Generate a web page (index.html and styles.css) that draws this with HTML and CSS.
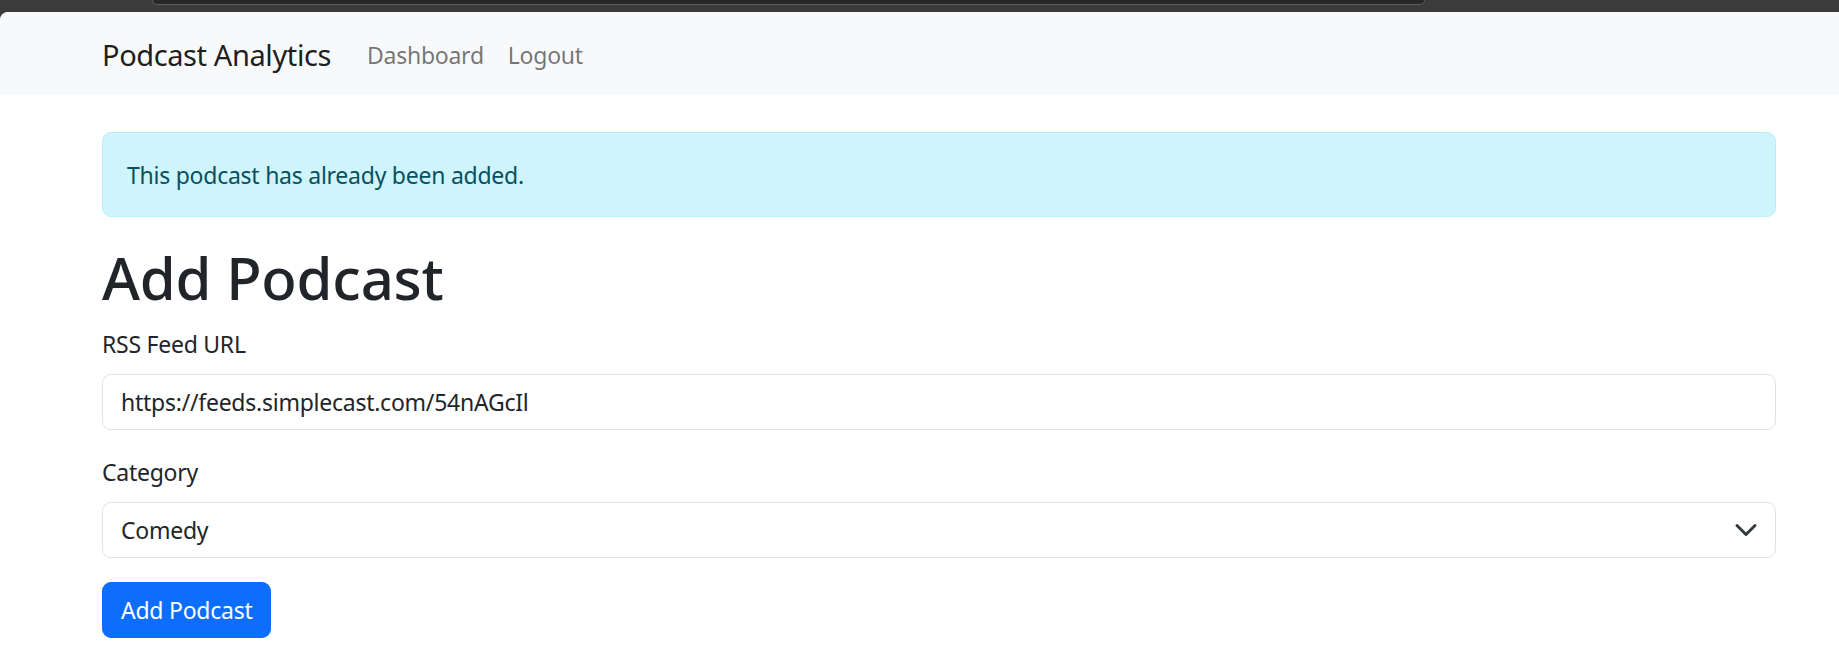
FILE: index.html
```html
<!DOCTYPE html>
<html lang="en">
<head>
<meta charset="utf-8">
<title>Add Podcast</title>
<link rel="stylesheet" href="styles.css">
</head>
<body>
<div class="chrome"><div class="chrome-bar"></div></div>
<div class="page">
  <nav class="navbar">
    <div class="container nav-inner">
      <a class="brand" href="#">Podcast Analytics</a>
      <a class="nav-link" href="#">Dashboard</a>
      <a class="nav-link" href="#">Logout</a>
    </div>
  </nav>
  <main class="container main">
    <div class="alert">This podcast has already been added.</div>
    <h1 class="title">Add Podcast</h1>
    <form class="form">
      <div class="field">
        <label class="label" for="rss">RSS Feed URL</label>
        <input class="control" id="rss" type="text" value="https://feeds.simplecast.com/54nAGcIl">
      </div>
      <div class="field">
        <label class="label" for="cat">Category</label>
        <div class="select-wrap">
          <div class="control select" id="cat">Comedy</div>
          <svg class="chevron" viewBox="0 0 16 16" width="24" height="24"><path d="m2 5 6 6 6-6" fill="none" stroke="#343a40" stroke-width="2" stroke-linecap="round" stroke-linejoin="round"/></svg>
        </div>
      </div>
      <button class="btn" type="button">Add Podcast</button>
    </form>
  </main>
</div>
</body>
</html>
```
FILE: styles.css
```css
* { box-sizing: border-box; }
html, body { margin: 0; padding: 0; }
body {
  background: #3b3b3b;
  font-family: "Noto Sans", "Open Sans", sans-serif;
  font-size: 23px;
  letter-spacing: -0.25px;
  color: #212529;
  overflow: hidden;
}
.chrome {
  height: 12px;
  padding-left: 152px;
  display: flex;
  align-items: flex-start;
}
.chrome-bar {
  width: 1273px;
  height: 5px;
  background: #282828;
  border: 1px solid #5c5c5c;
  border-top: none;
  border-radius: 0 0 9px 9px;
}
.page {
  background: #fff;
  border-top-left-radius: 8px;
  height: 644px;
  overflow: hidden;
}
.container {
  width: 1674px;
  margin-left: 102px;
}
.navbar {
  background: #f8f9fa;
  height: 83px;
  border-top-left-radius: 8px;
  display: flex;
  align-items: center;
}
.nav-inner {
  display: flex;
  align-items: center;
  padding-top: 2px;
}
.brand {
  font-size: 29px;
  letter-spacing: -0.4px;
  color: rgba(0,0,0,.9);
  text-decoration: none;
  margin-right: 24px;
}
.nav-link {
  color: rgba(0,0,0,.55);
  text-decoration: none;
  padding: 0 12px;
}
.main {
  padding-top: 37px;
}
.alert {
  background: #cff4fc;
  border: 1.5px solid #b6effb;
  color: #055160;
  border-radius: 9px;
  height: 85px;
  padding: 0 24px;
  display: flex;
  align-items: center;
}
.title {
  font-size: 58px;
  letter-spacing: -0.2px;
  font-weight: 500;
  line-height: 72px;
  margin: 25px 0 12px;
}
.field { margin-bottom: 24px; }
.label {
  display: block;
  line-height: 36px;
  margin-bottom: 12px;
}
.control {
  display: block;
  width: 100%;
  height: 56px;
  padding: 0 18px;
  font: inherit;
  letter-spacing: inherit;
  color: #212529;
  background: #fff;
  border: 1.5px solid #dee2e6;
  border-radius: 9px;
}
.select-wrap {
  position: relative;
}
.select {
  display: flex;
  align-items: center;
}
.chevron {
  position: absolute;
  right: 18px;
  top: 16px;
}
.btn {
  font: inherit;
  letter-spacing: inherit;
  color: #fff;
  background: #0d6efd;
  border: 1.5px solid #0d6efd;
  border-radius: 9px;
  height: 56px;
  padding: 0 18px;
  display: flex;
  align-items: center;
}
```
